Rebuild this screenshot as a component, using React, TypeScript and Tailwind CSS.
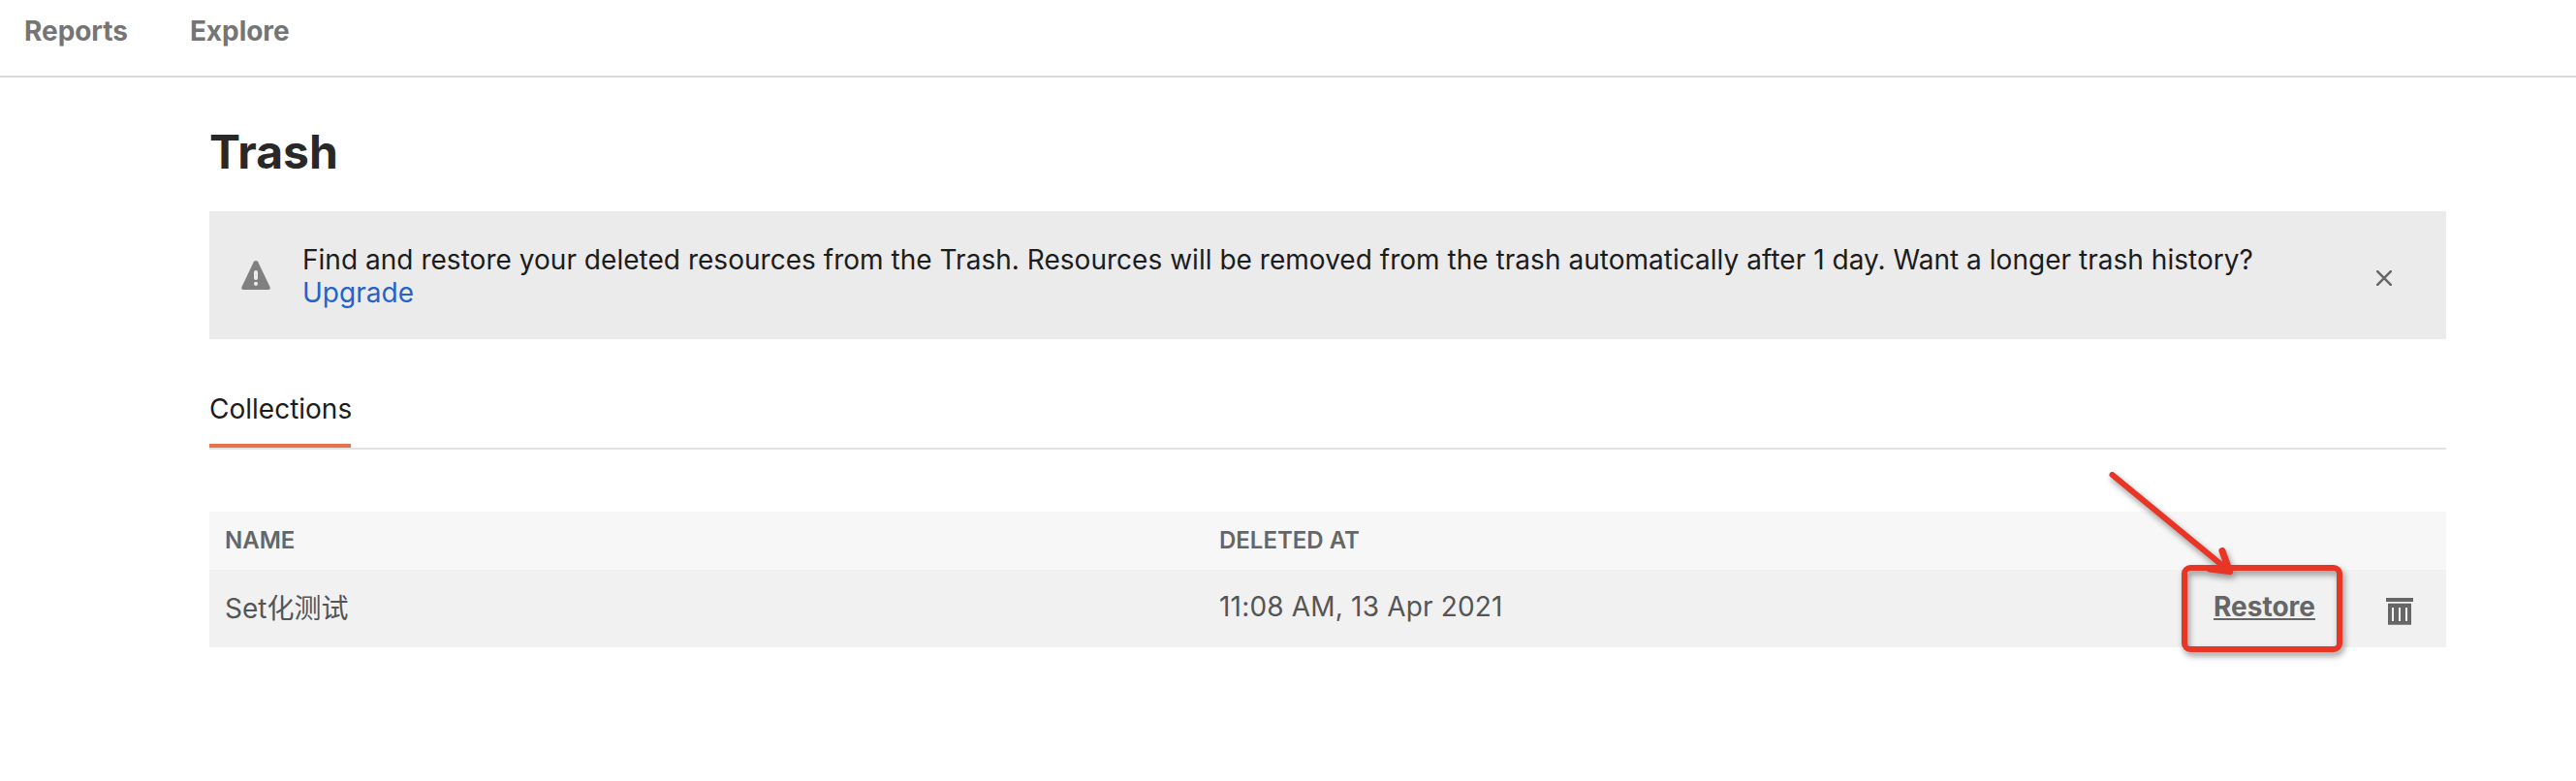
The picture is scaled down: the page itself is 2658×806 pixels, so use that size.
import React from "react";

function WarningIcon() {
  return (
    <svg className="h-[30px] w-[30px] shrink-0" viewBox="0 0 30 30">
      <path
        d="M12.800 1.300Q15-1.200 17.200 1.300L29.500 27Q30.400 29.800 28 30H2Q-.4 29.800.5 27Z"
        fill="#808080"
      />
      <rect x="13" y="10" width="4" height="10" rx="2" fill="#ebebeb" />
      <circle cx="15" cy="23.800" r="2.100" fill="#ebebeb" />
    </svg>
  );
}

function CloseIcon() {
  return (
    <svg className="h-4 w-4" viewBox="0 0 16 16">
      <path d="M1.200 1.200 14.800 14.800M14.800 1.200 1.200 14.800" stroke="#666" strokeWidth="2.500" strokeLinecap="round" />
    </svg>
  );
}

function TrashIcon() {
  return (
    <svg className="mt-[6px] h-[28px] w-[28px]" viewBox="0 0 28 28">
      <path d="M0 0H28V4H0ZM2 5.700H26V27.700H2Z" fill="#666" />
      <path d="M6 10H8V24H6ZM13 10H15V24H13ZM20 10H22V24H20Z" fill="#f1f1f1" />
    </svg>
  );
}

function RestoreHighlight() {
  return (
    <svg
      className="pointer-events-none absolute right-[94px] -bottom-[22px] h-[220px] w-[270px]"
      viewBox="2160 470 270 220"
      fill="none"
      stroke="#e83525"
      strokeWidth="6"
      strokeLinecap="round"
      strokeLinejoin="round"
    >
      <g className="drop-shadow-[2px_4px_3px_rgba(0,0,0,0.4)]">
        <rect x="2254" y="586" width="160" height="84" rx="6" />
        <path d="M2179.500 490 2301 590" />
        <path d="M2293 568.500 2300.500 589.500 2280 587" strokeWidth="7" />
      </g>
    </svg>
  );
}

export default function App() {
  return (
    <div className="h-[806px] w-[2658px] overflow-hidden bg-white font-['Inter','Noto_Sans_CJK_SC',sans-serif] text-[28px] leading-[34px]">
      <nav className="flex h-20 gap-16 border-b-2 border-[#dadada] pt-[15px] pl-[25px] font-[650] tracking-[-0.05px] text-[#757575]">
        <span>Reports</span>
        <span>Explore</span>
      </nav>
      <main className="mr-[134px] ml-[216px]">
        <h1 className="pt-[47px] text-[48px] leading-[60px] font-[660] text-[#282828]">Trash</h1>
        <section className="mt-[31px] flex h-[132px] items-center bg-[#ebebeb] pr-14 pl-[33px]">
          <WarningIcon />
          <p className="mt-[2px] ml-[33px] flex-1 tracking-[0.028px] text-[#1c1c1c]">
            Find and restore your deleted resources from the Trash. Resources will be removed from the trash
            automatically after 1 day. Want a longer trash history?
            <br />
            <a className="text-[#2563c9]">Upgrade</a>
          </p>
          <button className="mt-[6px]">
            <CloseIcon />
          </button>
        </section>
        <div className="mt-[54px] flex h-[60px] border-b-2 border-[#e2e2e2]">
          <div className="h-[58px] w-[146px] border-b-4 border-[#e8734a] pt-px text-[#1c1c1c]">Collections</div>
        </div>
        <section className="relative mt-16">
          <div className="grid h-[60px] grid-cols-[1026px_1fr] items-center bg-[#f7f7f7] px-4 text-[24px] font-semibold text-[#666]">
            <span>NAME</span>
            <span>DELETED AT</span>
          </div>
          <div className="grid h-20 grid-cols-[1026px_1fr_auto_auto] items-center bg-[#f1f1f1] pr-[34px] pl-4 text-[#555]">
            <span>Set化测试</span>
            <span className="pb-1 tracking-[0.18px]">11:08 AM, 13 Apr 2021</span>
            <a className="mr-[73px] pb-1 font-[650] text-[#666] underline decoration-2 underline-offset-2 [text-decoration-skip-ink:none]">
              Restore
            </a>
            <TrashIcon />
          </div>
          <RestoreHighlight />
        </section>
      </main>
    </div>
  );
}
